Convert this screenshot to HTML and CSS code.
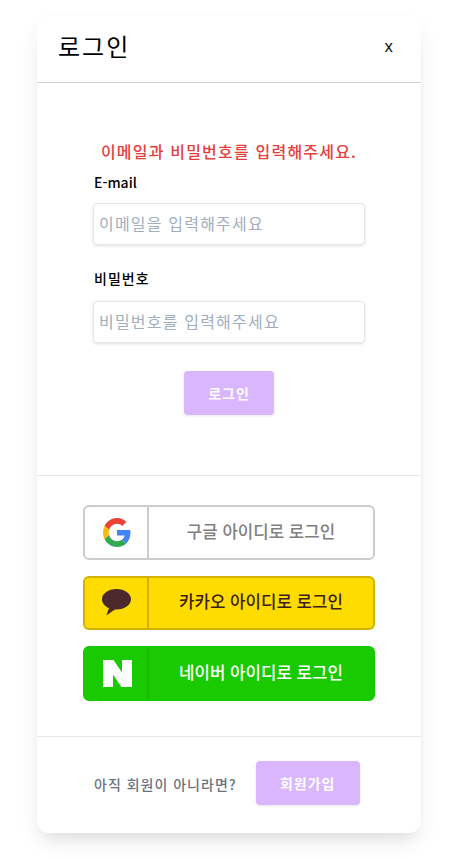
FILE: index.html
```html
<!DOCTYPE html>
<html lang="ko">
<head>
<meta charset="utf-8">
<title>로그인</title>
<link rel="stylesheet" href="styles.css">
</head>
<body>
<main class="card">
  <header class="head">
    <h1 class="title">로그인</h1>
    <button class="close" type="button">x</button>
  </header>
  <section class="form-area">
    <p class="error">이메일과 비밀번호를 입력해주세요.</p>
    <form class="form">
      <label class="label label-email" for="email">E-mail</label>
      <input class="input input-email" id="email" type="text" placeholder="이메일을 입력해주세요">
      <label class="label label-pw" for="pw">비밀번호</label>
      <input class="input input-pw" id="pw" type="text" placeholder="비밀번호를 입력해주세요">
      <button class="btn btn-login" type="button">로그인</button>
    </form>
  </section>
  <section class="social">
    <a class="soc soc-google">
      <span class="soc-icon">
        <svg width="28" height="29" viewBox="0 0 48 48" preserveAspectRatio="none"><path fill="#EA4335" d="M24 9.500c3.500 0 6.700 1.200 9.200 3.600l6.900-6.900C35.900 2.400 30.500 0 24 0 14.600 0 6.500 5.400 2.600 13.200l8 6.200C12.500 13.700 17.800 9.500 24 9.500z"/><path fill="#4285F4" d="M47 24.500c0-1.600-.2-3.100-.4-4.500H24v9h12.900c-.6 3-2.200 5.500-4.700 7.200l7.700 6C44.400 37.900 47 31.800 47 24.500z"/><path fill="#FBBC05" d="M10.600 28.600c-.5-1.400-.8-3-.8-4.600s.3-3.200.8-4.600l-8-6.200C.9 16.500 0 20.100 0 24s.9 7.500 2.600 10.800l8-6.200z"/><path fill="#34A853" d="M24 48c6.500 0 11.900-2.100 15.900-5.800l-7.700-6c-2.200 1.400-4.900 2.300-8.200 2.300-6.200 0-11.500-4.200-13.400-9.900l-8 6.200C6.500 42.600 14.600 48 24 48z"/></svg>
      </span>
      <span class="soc-text">구글 아이디로 로그인</span>
    </a>
    <a class="soc soc-kakao">
      <span class="soc-icon soc-icon-kakao">
        <svg width="29" height="27" viewBox="0 0 29 27"><path fill="#4A2A2B" d="M14.500 0C6.500 0 0 4.300 0 10.200c0 3.900 2.800 7.100 7 8.900L4.300 26.600l8.600-6.200c.5.100 1.100.1 1.600.1 8 0 14.500-4.500 14.500-10.300S22.500 0 14.500 0z"/></svg>
      </span>
      <span class="soc-text">카카오 아이디로 로그인</span>
    </a>
    <a class="soc soc-naver">
      <span class="soc-icon">
        <svg width="29" height="27" viewBox="0 0 29 27"><path fill="#fff" d="M0 0h10.500L19 12.500V0h10v27H18.500L10 14.500V27H0z"/></svg>
      </span>
      <span class="soc-text">네이버 아이디로 로그인</span>
    </a>
  </section>
  <footer class="foot">
    <span class="foot-text">아직 회원이 아니라면?</span>
    <button class="btn btn-join" type="button">회원가입</button>
  </footer>
</main>
</body>
</html>
```
FILE: styles.css
```css
* { box-sizing: border-box; }
html, body { margin: 0; padding: 0; background: #fff; }
body {
  font-family: "Noto Sans CJK KR", "Noto Sans", sans-serif;
  height: 859px;
  overflow: hidden;
}
.card {
  width: 384px;
  height: 817px;
  margin: 16px 0 0 37px;
  background: #fff;
  border-radius: 12px;
  box-shadow: 0 10px 25px -5px rgba(0,0,0,.12), 0 10px 10px -5px rgba(0,0,0,.04);
  display: flex;
  flex-direction: column;
}
.head {
  height: 67px;
  border-bottom: 1px solid #d1d5db;
  display: flex;
  align-items: center;
  justify-content: space-between;
  padding: 0 28px 6px 21px;
  flex: none;
}
.title { margin: 0; font-size: 24px; font-weight: 400; line-height: 32px; color: #000; letter-spacing: 2px; }
.close {
  border: 0; background: none; padding: 0;
  font: 400 16px "Noto Sans", sans-serif;
  color: #111;
}
.form-area {
  height: 393px;
  flex: none;
  border-bottom: 1px solid #e5e7eb;
  padding-top: 56px;
  display: flex;
  flex-direction: column;
  align-items: center;
}
.error {
  margin: 0;
  font-size: 16px;
  line-height: 24px;
  font-weight: 500;
  color: #e53e3e;
  letter-spacing: 1.2px;
}
.form { width: 272px; display: flex; flex-direction: column; }
.label { font-size: 14px; line-height: 20px; font-weight: 500; color: #000; padding-left: 1px; }
.label-email { margin-top: 9px; }
.label-pw { margin-top: 23px; letter-spacing: 1px; }
.input {
  width: 272px;
  height: 42px;
  border: 1px solid #e5e7eb;
  border-radius: 4px;
  padding: 0 5px 2px;
  font: 400 16px "Noto Sans CJK KR", sans-serif;
  letter-spacing: 1.2px;
  background: #fff;
  box-shadow: 0 1px 3px rgba(0,0,0,.12);
  color: #374151;
}
.input-email { margin-top: 11px; }
.input-pw { margin-top: 13px; }
.input::placeholder { color: #a0aec0; opacity: 1; }
.btn {
  border: 0;
  border-radius: 4px;
  background: #d9b6fd;
  color: #fff;
  font: 700 14px "Noto Sans CJK KR", sans-serif;
  letter-spacing: 1px;
  box-shadow: 0 1px 3px rgba(0,0,0,.1);
}
.btn-login { width: 90px; height: 44px; margin: 28px auto 0; }
.social {
  height: 261px;
  flex: none;
  border-bottom: 1px solid #e5e7eb;
  padding: 29px 46px 0;
  display: flex;
  flex-direction: column;
  gap: 16px;
}
.soc {
  width: 292px;
  height: 54.500px;
  border: 2px solid;
  border-radius: 6px;
  display: flex;
  align-items: center;
}
.soc-icon {
  width: 64px;
  height: 100%;
  flex: none;
  display: flex;
  align-items: center;
  justify-content: center;
  border-right: 2px solid;
  border-color: inherit;
  padding-left: 2px;
}
.soc-icon-kakao { padding-left: 0; }
.soc-text { flex: 1; text-align: center; font-size: 16.800px; font-weight: 500; padding-bottom: 3px; }
.soc-google { border-color: #cccccc; color: #808080; background: #fff; }
.soc-kakao { border-color: #d4b000; color: #3c1e1e; background: #ffdc00; }
.soc-naver { border-color: #19c900; color: #fff; background: #19ca00; }
.soc-naver .soc-icon { border-color: #16b800; }
.foot {
  flex: 1;
  display: flex;
  align-items: flex-start;
  padding: 24px 0 0 57px;
}
.foot-text {
  font-size: 14px;
  font-weight: 500;
  color: #6b7280;
  margin-top: 13px;
  letter-spacing: 1px;
}
.btn-join { width: 104px; height: 44px; margin-left: 19px; }
```
